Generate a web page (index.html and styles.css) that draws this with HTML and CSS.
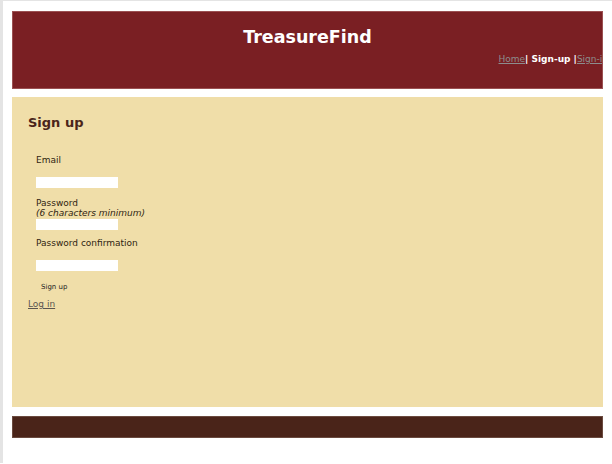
FILE: index.html
```html
<!DOCTYPE html>
<html>
<head>
<meta charset="utf-8">
<title>TreasureFind</title>
<link rel="stylesheet" href="styles.css">
</head>
<body>
<div class="page">
  <header class="header">
    <h1 class="title">TreasureFind</h1>
    <nav class="nav"><a href="#" class="nav-link">Home</a><span class="nav-current">| Sign-up |</span><a href="#" class="nav-link">Sign-in</a></nav>
  </header>
  <main class="content">
    <h2 class="heading">Sign up</h2>
    <form class="form">
      <div class="field">
        <label class="label">Email</label>
        <input class="input" type="email">
      </div>
      <div class="field">
        <label class="label">Password<br><em class="hint">(6 characters minimum)</em></label>
        <input class="input input-tight" type="password">
      </div>
      <div class="field">
        <label class="label">Password confirmation</label>
        <input class="input" type="password">
      </div>
      <button class="submit" type="button">Sign up</button>
    </form>
    <a href="#" class="login">Log in</a>
  </main>
  <footer class="footer"></footer>
</div>
</body>
</html>
```
FILE: styles.css
```css
html, body {
  margin: 0;
  padding: 0;
  background: #ffffff;
}
body {
  font-family: "DejaVu Sans", Verdana, sans-serif;
  border-left: 3px solid #e4e4e4;
  border-top: 1px solid #e4e4e4;
  min-height: 463px;
  box-sizing: border-box;
}
.page {
  padding: 10px 9px 0 9px;
}
.header {
  background: #7a1f23;
  border: 1px solid #9b5052;
  height: 78px;
  box-sizing: border-box;
  overflow: hidden;
  display: flex;
  flex-direction: column;
}
.title {
  margin: 14px 0 0 0;
  text-align: center;
  color: #ffffff;
  font-size: 17.5px;
  font-weight: bold;
  line-height: 22px;
}
.nav {
  margin-top: 5px;
  margin-right: -6px;
  text-align: right;
  font-size: 9px;
  line-height: 12px;
  white-space: nowrap;
}
.nav-link {
  color: #8d8d8d;
  text-decoration: underline;
}
.nav-current {
  color: #ffffff;
  font-weight: bold;
}
.content {
  margin-top: 8px;
  background: #f0dea9;
  height: 310px;
  box-sizing: border-box;
  padding: 17px 16px;
}
.heading {
  margin: 0;
  font-size: 13px;
  line-height: 18px;
  font-weight: bold;
  color: #4a2419;
}
.form {
  padding: 23px 0 0 8px;
  display: flex;
  flex-direction: column;
  align-items: flex-start;
}
.field {
  display: flex;
  flex-direction: column;
  align-items: flex-start;
}
.label {
  font-size: 9px;
  line-height: 10px;
  color: #2f2410;
}
.hint {
  font-style: italic;
}
.input {
  margin: 12px 0 10px 0;
  width: 82px;
  height: 11px;
  padding: 0;
  border: 0;
  background: #ffffff;
  box-sizing: border-box;
}
.input-tight {
  margin-top: 1px;
  margin-bottom: 8px;
}
.submit {
  margin: 1px 0 0 0;
  padding: 0 5px;
  border: 0;
  background: transparent;
  font-family: "DejaVu Sans", Verdana, sans-serif;
  font-size: 7px;
  line-height: 10px;
  color: #222222;
}
.login {
  display: inline-block;
  margin-top: 5px;
  font-size: 9px;
  line-height: 12px;
  color: #5a5550;
  text-decoration: underline;
}
.footer {
  margin-top: 9px;
  height: 22px;
  background: #4a2419;
  border: 1px solid #6a4a3f;
  box-sizing: border-box;
}
```
